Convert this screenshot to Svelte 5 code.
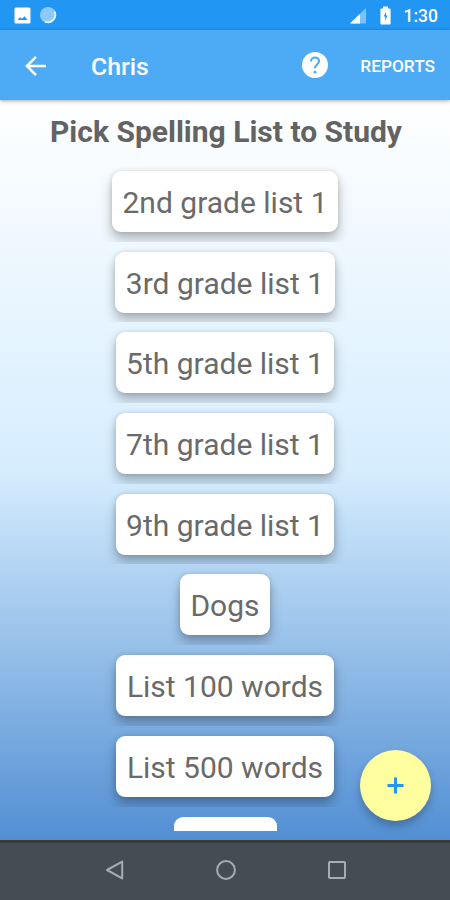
<script>
  const lists = [
    '2nd grade list 1',
    '3rd grade list 1',
    '5th grade list 1',
    '7th grade list 1',
    '9th grade list 1',
    'Dogs',
    'List 100 words',
    'List 500 words'
  ];
</script>

<div class="screen">
  <div class="status">
    <svg class="photo" width="17" height="17" viewBox="0 0 17 17">
      <rect x="0.5" y="0.5" width="16" height="16" rx="1.5" fill="#fff" />
      <path d="M3.6 13l2.4-2.8 2 1.5 2.6-2.4L13.6 13z" fill="#2196f3" />
    </svg>
    <svg width="18" height="18" viewBox="0 0 18 18">
      <circle cx="9" cy="9" r="8" fill="#8dcafa" />
      <path d="M15.5 5.5A7.4 7.4 0 0 1 6 15.6" fill="none" stroke="#e6f4ff" stroke-width="1.8" />
    </svg>
    <span class="space"></span>
    <svg class="signal" width="17" height="16" viewBox="0 0 17 16">
      <path d="M0 15.5L16 0v15.5z" fill="#7dc1f9" />
      <path d="M0 15.5L10 5.8v9.7z" fill="#fff" />
    </svg>
    <svg class="battery" width="11" height="19" viewBox="0 0 11 19">
      <path d="M3 0.5h5v2h1.6q1 0 1 1v14q0 1-1 1H1.4q-1 0-1-1v-14q0-1 1-1H3z" fill="#fff" />
      <path d="M6 6L3.6 10.6h1.6v3.8L7.6 9.6H6z" fill="#2196f3" />
    </svg>
    <span class="time">1:30</span>
  </div>

  <header>
    <svg class="back" width="22" height="22" viewBox="0 0 22 22">
      <path d="M21 11H2.5M11 1.8L1.9 11l9.1 9.2" fill="none" stroke="#fff" stroke-width="2.5" />
    </svg>
    <h1>Chris</h1>
    <svg class="help" width="26" height="26" viewBox="2 2 20 20">
      <circle cx="12" cy="12" r="10" fill="#fff" />
      <path
        d="M8.9 9.3c0-1.9 1.4-3.1 3.1-3.1s3.1 1.2 3.1 2.9c0 2.2-3.1 2.5-3.1 5.4"
        fill="none"
        stroke="#4dabf5"
        stroke-width="1.6"
      />
      <circle cx="12" cy="17.5" r="1.1" fill="#4dabf5" />
    </svg>
    <span class="reports">REPORTS</span>
  </header>

  <main>
    <h2>Pick Spelling List to Study</h2>
    <div class="list">
      {#each lists as name}
        <div class="row"><button class="card">{name}</button></div>
      {/each}
      <div class="row"><div class="card blank"></div></div>
    </div>
    <button class="fab" aria-label="Add list">
      <svg width="17" height="17" viewBox="0 0 17 17">
        <path d="M8.5 0.5v16M0.5 8.5h16" stroke="#2196f3" stroke-width="3" />
      </svg>
    </button>
  </main>

  <nav>
    <svg width="20" height="20" viewBox="0 0 20 20"><path d="M17.2 1.6v16.8L2 10z" /></svg>
    <svg width="20" height="20" viewBox="0 0 20 20"><circle cx="10" cy="10" r="8.9" /></svg>
    <svg width="20" height="20" viewBox="0 0 20 20"><rect x="2" y="2" width="16" height="16" rx="0.8" /></svg>
  </nav>
</div>

<style>
  .screen {
    width: 450px;
    height: 900px;
    display: flex;
    flex-direction: column;
    overflow: hidden;
    font-family: Roboto, 'Liberation Sans', sans-serif;
  }
  .status {
    height: 30px;
    flex: none;
    display: flex;
    align-items: center;
    padding: 0 12px 0 14px;
    box-sizing: border-box;
    background: #2196f3;
  }
  .photo {
    margin-right: 8px;
  }
  .space {
    flex: 1;
  }
  .signal {
    margin: 2px 13px 0 0;
  }
  .battery {
    margin-right: 13px;
  }
  .time {
    font-size: 17.5px;
    font-weight: 500;
    line-height: 30px;
    padding-top: 2px;
    color: #fff;
  }
  header {
    position: relative;
    z-index: 1;
    height: 70px;
    flex: none;
    display: flex;
    align-items: center;
    box-sizing: border-box;
    padding: 2px 15px 0 25px;
    background: #4dabf5;
    color: #fff;
    box-shadow: 0 1px 4px rgba(0, 0, 0, 0.35);
  }
  h1 {
    margin: 0 0 0 44px;
    flex: 1;
    font-size: 24.8px;
    font-weight: 500;
  }
  .help {
    margin: -2px 32px 0 0;
  }
  .reports {
    margin-top: -1px;
    font-size: 17.3px;
    font-weight: 500;
  }
  main {
    position: relative;
    height: 740px;
    flex: none;
    display: flex;
    flex-direction: column;
    align-items: center;
    background: linear-gradient(#fff 0%, #d6edfe 50%, #528fd3 100%);
  }
  h2 {
    margin: 0;
    height: 61px;
    padding: 1px 0 0 2px;
    box-sizing: border-box;
    line-height: 62px;
    font-size: 30px;
    font-weight: 700;
    color: #636363;
    white-space: nowrap;
  }
  .list {
    width: 100%;
    height: 669.5px;
    overflow: hidden;
  }
  .row {
    height: 80.7px;
    overflow: hidden;
    display: flex;
    justify-content: center;
    padding-top: 10px;
    box-sizing: border-box;
  }
  .card {
    height: 61px;
    padding: 2px 10.5px 0;
    box-sizing: border-box;
    border: 0;
    border-radius: 9px;
    background: #fff;
    color: #6a6a6a;
    font-family: inherit;
    font-size: 30px;
    white-space: nowrap;
    box-shadow:
      0 7px 12px rgba(0, 0, 0, 0.27),
      0 0 5px rgba(0, 0, 0, 0.12);
  }
  .blank {
    width: 103px;
    box-shadow: none;
  }
  .fab {
    position: absolute;
    right: 19px;
    bottom: 19px;
    width: 71px;
    height: 71px;
    padding: 0;
    border: 0;
    border-radius: 50%;
    display: flex;
    align-items: center;
    justify-content: center;
    background: #ffff9f;
    box-shadow: 0 5px 9px rgba(0, 0, 0, 0.24);
  }
  nav {
    flex: 1;
    display: flex;
    justify-content: center;
    gap: 91px;
    padding: 17px 0 0 1px;
    background: #464d52;
    border-top: 3px solid #343c3c;
  }
  nav svg {
    fill: none;
    stroke: #a5adb1;
    stroke-width: 2;
    stroke-linejoin: round;
  }
</style>
